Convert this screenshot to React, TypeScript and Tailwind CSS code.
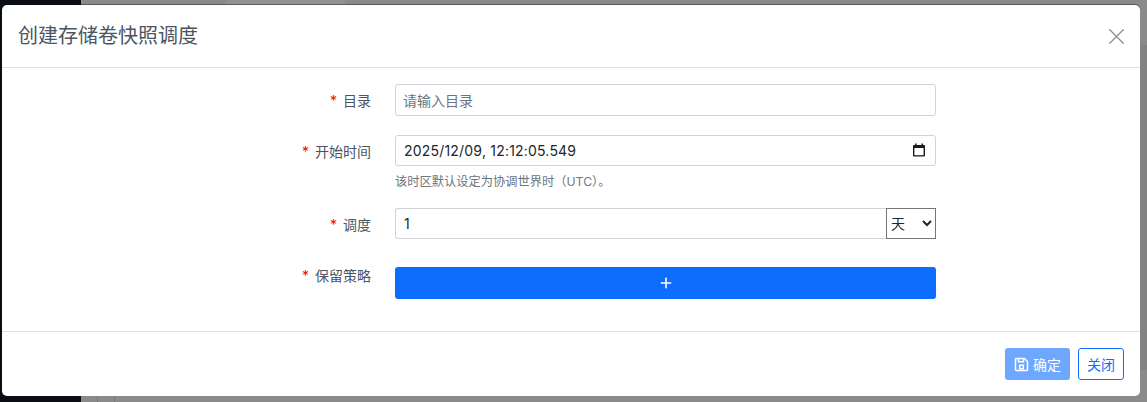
import { X, Plus } from "lucide-react";

const font = { fontFamily: "Inter, 'Noto Sans CJK SC', sans-serif" };

function Label({ children, top = "mt-[2px]" }: { children: string; top?: string }) {
  return (
    <label className={`${top} w-[371px] shrink-0 pr-[2px] text-right text-[14px] leading-[20px] text-[#4b5563]`}>
      <span className="mr-[6px] text-[#ff0000]">*</span>
      {children}
    </label>
  );
}

function CalendarGlyph() {
  return (
    <svg width="14" height="14" viewBox="0 0 14 14" className="absolute right-[10px] top-[8px]">
      <path d="M3 0.5h1.5V2h5V0.5H11V2h1a1 1 0 0 1 1 1v9.5a1 1 0 0 1-1 1H2a1 1 0 0 1-1-1V3a1 1 0 0 1 1-1h1z" fill="#1a1a1a" />
      <rect x="2.4" y="5" width="9.2" height="7.2" fill="#fff" />
    </svg>
  );
}

function SaveGlyph() {
  return (
    <svg width="15" height="15" viewBox="0 0 15 15" fill="none" stroke="#fff" strokeWidth="1.5">
      <path d="M1.5 2.2a.7.7 0 0 1 .7-.7h8.3l3 3v8.3a.7.7 0 0 1-.7.7H2.2a.7.7 0 0 1-.7-.7z" />
      <path d="M4.5 1.8v3h5v-3" />
      <rect x="5.7" y="8.2" width="3.6" height="3.6" />
    </svg>
  );
}

export default function App() {
  return (
    <div className="relative h-[402px] w-[1147px] overflow-hidden bg-[#8a8a8a]" style={font}>
      {/* page behind the dialog */}
      <div className="absolute left-0 top-0 h-full w-[81px] bg-[#0a0d14]" />
      <div className="absolute left-[227px] top-0 h-[5px] w-[118px] bg-[#919191]" />
      <div className="absolute left-[97px] top-[396px] h-[6px] w-px bg-[#7a7a7a]" />
      <div className="absolute left-[114px] top-[396px] h-[6px] w-px bg-[#7a7a7a]" />
      <div className="absolute left-[1140px] top-[45px] h-[325px] w-[7px] bg-[#828282]" />

      <div className="absolute left-[2px] top-[5px] flex h-[391px] w-[1138px] flex-col rounded-[5px] bg-white shadow-[0_-1px_0_rgba(0,0,0,0.35)]">
        <header className="flex h-[63px] shrink-0 items-center justify-between border-b border-[#dee2e6] pl-[16px] pr-[10px]">
          <h5 className="text-[20px] font-normal text-[#4b5563]">创建存储卷快照调度</h5>
          <X size={27} strokeWidth={1.1} className="text-[#8c8c8c]" />
        </header>

        <div className="flex flex-1 flex-col pt-[16px]">
          <div className="flex items-center">
            <Label>目录</Label>
            <input
              placeholder="请输入目录"
              className="ml-[22px] h-[32px] w-[541px] rounded-[3px] border border-[#ced4da] pl-[7px] pr-[8px] text-[14px] text-[#212529] outline-none placeholder:text-[#6c757d]"
            />
          </div>

          <div className="mt-[19px] flex items-center">
            <Label>开始时间</Label>
            <div className="relative ml-[22px] w-[541px]">
              <input
                defaultValue="2025/12/09, 12:12:05.549"
                className="h-[31px] w-full rounded-[3px] border border-[#ced4da] px-[8px] text-[14px] tracking-[0.2px] text-[#212529] outline-none"
              />
              <CalendarGlyph />
            </div>
          </div>
          <p className="ml-[393px] mt-[7px] text-[12.25px] leading-[18px] text-[#6c757d]">
            该时区默认设定为协调世界时（UTC）。
          </p>

          <div className="mt-[17px] flex items-center">
            <Label>调度</Label>
            <div className="ml-[22px] flex h-[31px] w-[541px]">
              <input
                defaultValue="1"
                className="min-w-0 flex-1 rounded-l-[3px] border border-r-0 border-[#ced4da] px-[8px] text-[14px] text-[#212529] outline-none"
              />
              <select className="w-[50px] border border-[#767676] bg-white text-[14px] text-[#212529] outline-none">
                <option>天</option>
              </select>
            </div>
          </div>

          <div className="mt-[28px] flex items-start">
            <Label top="-mt-px">保留策略</Label>
            <button className="ml-[22px] flex h-[32px] w-[541px] items-center justify-center rounded-[3px] bg-[#0d6efd] text-white">
              <Plus size={16} strokeWidth={2.4} />
            </button>
          </div>
        </div>

        <footer className="flex h-[65px] shrink-0 items-center justify-end gap-[8px] border-t border-[#dee2e6] pr-[16px]">
          <button className="flex h-[32px] w-[65px] items-center justify-center gap-[4px] rounded-[3px] bg-[#6ea8fe] text-[14px] text-white">
            <SaveGlyph />
            确定
          </button>
          <button className="h-[32px] w-[46px] rounded-[3px] border border-[#0d6efd] bg-white text-[14px] text-[#0d6efd]">
            关闭
          </button>
        </footer>
      </div>
    </div>
  );
}
